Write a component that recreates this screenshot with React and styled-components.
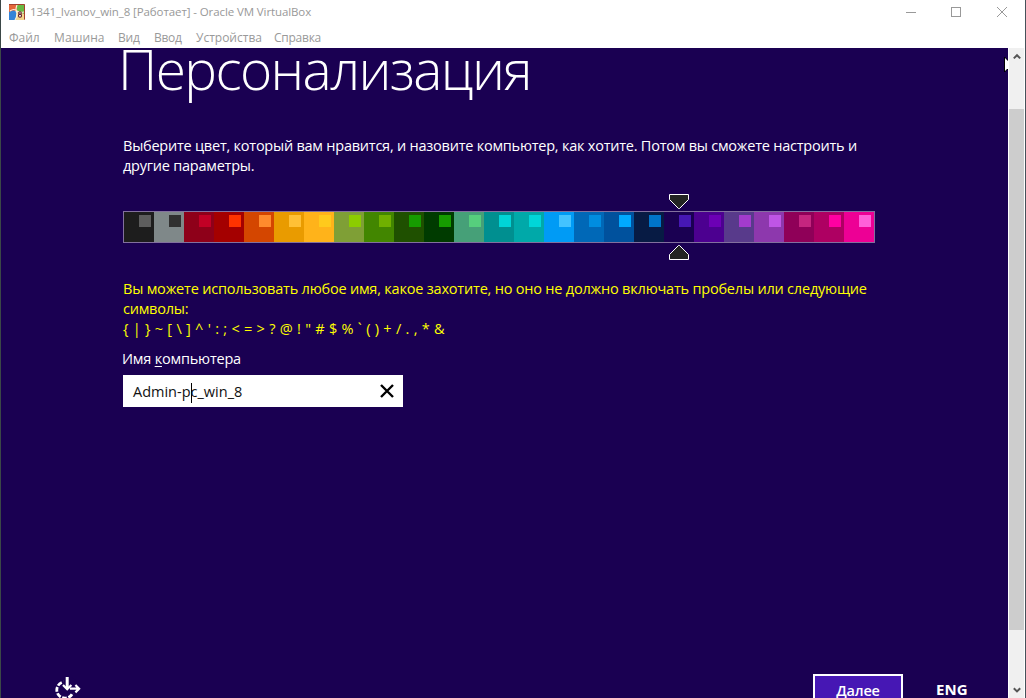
import React from "react";
import styled, { createGlobalStyle } from "styled-components";

const GlobalStyle = createGlobalStyle`
  * { box-sizing: border-box; }
  body { margin: 0; overflow: hidden; font-family: "Open Sans", "Noto Sans", sans-serif; }
`;

const Window = styled.div`
  width: 1026px;
  height: 698px;
  display: flex;
  flex-direction: column;
  background: #fff;
  border-left: 1px solid #3b4747;
  border-right: 1px solid #46525a;
  overflow: hidden;
`;

const TitleBar = styled.header`
  height: 24px;
  flex: none;
  display: flex;
  align-items: center;
  padding-left: 8px;
`;

const TitleText = styled.span`
  flex: 1;
  margin-left: 5px;
  font-size: 11.5px;
  line-height: 24px;
  letter-spacing: -0.1px;
  color: #999;
  white-space: nowrap;
`;

const WindowButton = styled.span`
  width: 45.5px;
  height: 22px;
  display: flex;
  align-items: center;
  justify-content: center;
`;

const MenuBar = styled.nav`
  height: 24px;
  flex: none;
  display: flex;
  padding-left: 8px;
`;

const MenuItem = styled.span`
  width: ${(p) => p.$width}px;
  font-size: 12px;
  line-height: 28px;
  letter-spacing: ${(p) => p.$tracking}px;
  color: #999;
  white-space: nowrap;
`;

const Viewport = styled.div`
  flex: 1;
  min-height: 0;
  display: flex;
`;

const Screen = styled.main`
  position: relative;
  width: 1007px;
  display: flex;
  flex-direction: column;
  background: #1a0052;
  color: #fff;
  overflow: hidden;
`;

const Content = styled.section`
  flex: 1;
  padding-left: 122px;
`;

const Heading = styled.h1`
  height: 88px;
  margin: 0 0 0 -5px;
  font-size: 55px;
  font-weight: 300;
  line-height: 42px;
  letter-spacing: ${(p) => p.$tracking}px;
  white-space: nowrap;
`;

const Paragraph = styled.div`
  color: ${(p) => (p.$hint ? "#ffff00" : "#fff")};
`;

const Line = styled.div`
  height: 20px;
  font-size: 14.5px;
  line-height: 20px;
  letter-spacing: ${(p) => p.$tracking || 0}px;
  white-space: pre;
`;

const Picker = styled.div`
  width: 752px;
  margin: 18px 0 19px;
`;

const MarkerRow = styled.div`
  display: flex;
  height: ${(p) => p.$height}px;
  padding-left: 546px;
  align-items: ${(p) => p.$align};
`;

const Strip = styled.div`
  display: flex;
  height: 32px;
  border: 1px solid #82709e;
`;

const Swatch = styled.div`
  width: 30px;
  height: 30px;
  padding: 3px 3px 0 15px;
  background: ${(p) => p.$color};
`;

const Accent = styled.div`
  width: 12px;
  height: 12px;
  background: ${(p) => p.$color};
`;

const Label = styled.label`
  display: block;
  height: 36px;
  margin-left: -1px;
  font-size: 14.5px;
  line-height: 40px;
  letter-spacing: ${(p) => p.$tracking}px;

  u { text-underline-offset: 2px; text-decoration-thickness: 1px; }
`;

const Field = styled.div`
  width: 280px;
  height: 32px;
  display: flex;
  align-items: center;
  justify-content: space-between;
  padding: 0 8px 0 10px;
  background: #fff;
  color: #111;
  font-size: 14.5px;
  letter-spacing: ${(p) => p.$tracking}px;
`;

const FieldText = styled.span`
  padding-top: 3px;
  line-height: 20px;
`;

const Caret = styled.span`
  display: inline-block;
  width: 1px;
  height: 20px;
  margin: -2px -1px 0 0;
  background: #000;
  vertical-align: middle;
`;

const Footer = styled.footer`
  height: 24px;
  flex: none;
  display: flex;
  padding-left: 52px;
`;

const NextButton = styled.div`
  width: 90px;
  height: 36px;
  margin-left: 730px;
  border: 2px solid #fff;
  background: #4617b4;
  font-size: 14.5px;
  font-weight: 600;
  line-height: 30px;
  text-align: center;
  letter-spacing: ${(p) => p.$tracking}px;

  u { text-underline-offset: 2px; }
`;

const Language = styled.div`
  margin-left: 33px;
  font-size: 15px;
  font-weight: 700;
  line-height: 31px;
  letter-spacing: ${(p) => p.$tracking}px;
`;

const Pointer = styled.svg`
  position: absolute;
  right: 0;
  top: 9px;
`;

const ScrollBar = styled.aside`
  width: 17px;
  display: flex;
  flex-direction: column;
  border-left: 1px solid #fff;
  border-right: 1px solid #fff;
  background: #f0f0f0;
`;

const ScrollArrow = styled.span`
  height: ${(p) => p.$height}px;
  display: flex;
  justify-content: center;
  padding-top: ${(p) => p.$top}px;
`;

const Thumb = styled.div`
  height: 521px;
  margin-top: 44px;
  background: #cdcdcd;
`;

const menu = [
  ["Файл", 45, 0],
  ["Машина", 64, 0.1],
  ["Вид", 36, -0.2],
  ["Ввод", 42, -0.3],
  ["Устройства", 78, 0],
  ["Справка", 60, -0.25],
];

const swatches = [
  ["#1d1d1d", "#5d5d5d"], ["#7f8889", "#303030"], ["#8e0019", "#c10025"],
  ["#a40000", "#ff3300"], ["#d44600", "#ff8b2d"], ["#e99b00", "#ffc036"],
  ["#ffb31a", "#ffca1c"], ["#7f9f36", "#8ccc00"], ["#428600", "#70b000"],
  ["#1f5000", "#169b00"], ["#003b00", "#169b00"], ["#46a078", "#56ce7d"],
  ["#008f90", "#00d4d7"], ["#00a9a9", "#00d6d8"], ["#009bf5", "#43c3ff"],
  ["#0068b7", "#008de0"], ["#00519d", "#00a9ff"], ["#071b44", "#0074c9"],
  ["#1a0052", "#4617b4"], ["#4c0090", "#6c00b5"], ["#583a8b", "#a33bcd"],
  ["#8d38ad", "#bf55e5"], ["#8f0058", "#c5257f"], ["#ae0062", "#ff00a2"],
  ["#ed0095", "#ff5fd9"],
];

function AppIcon() {
  return (
    <svg width="16" height="16" viewBox="0 0 16 16">
      <rect width="16" height="16" fill="#c9c4b2" />
      <path d="M0 1h8v6L0 9Z" fill="#e4683a" />
      <path d="M8 1h7v9L8 7Z" fill="#68b943" />
      <path d="M0 8q5-3 8 0l-1 8H0Z" fill="#3484d8" />
      <path d="M8 8l7 2v6H7Z" fill="#f3d58c" />
      <path d="M1 7q4-3 7 0 3 2 7 1M8 1Q6 6 8 9q0 4-2 7" fill="none" stroke="#fff3d9" strokeWidth="1.2" />
      <path d="M0 .5h15.5v15" fill="none" stroke="#a5402d" strokeWidth="1" />
      <circle cx="11" cy="9" r="1.3" fill="#fff" stroke="#5c1720" strokeWidth="1.1" />
      <circle cx="11" cy="11.8" r="1.5" fill="#fff" stroke="#5c1720" strokeWidth="1.1" />
    </svg>
  );
}

function Marker({ up }) {
  return (
    <svg width="20" height="15" viewBox="0 0 20 15">
      <path
        d={up ? "M.5 14.5V9.5L9.5.5h1l9 9v5Z" : "M.5.5h19v5l-9 9h-1l-9-9Z"}
        fill="#222422"
        stroke="#fff"
      />
    </svg>
  );
}

function Chevron({ down }) {
  return (
    <svg width="8" height="7" viewBox="0 0 8 7">
      <path d={down ? "M.8 1.2L4 4.4l3.2-3.2" : "M.8 5.4L4 2.2l3.2 3.2"} fill="none" stroke="#555" strokeWidth="2" />
    </svg>
  );
}

function AccessIcon() {
  return (
    <svg width="30" height="26" viewBox="0 0 30 26" fill="none" stroke="#fff">
      <circle cx="12" cy="16" r="8.2" strokeWidth="2.8" strokeDasharray="4.9 1.54" strokeDashoffset="2" />
      <path d="M10.5 3h8l9 7v9h-9l-4-1-5-4z" fill="#1a0052" stroke="none" />
      <path d="M14.2 3v12" strokeWidth="3" />
      <path d="M10 11l4.2 4.2 4.2-4.2" strokeWidth="2.2" />
      <path d="M17 14.7h9M22.4 11l3.7 3.7-3.7 3.7" strokeWidth="2.2" />
    </svg>
  );
}

export default function App() {
  return (
    <Window>
      <GlobalStyle />
      <TitleBar>
        <AppIcon />
        <TitleText>1341_Ivanov_win_8 [Работает] - Oracle VM VirtualBox</TitleText>
        <WindowButton>
          <svg width="11" height="11" stroke="#999"><path d="M0 5.5h10" /></svg>
        </WindowButton>
        <WindowButton>
          <svg width="11" height="11" fill="none" stroke="#999"><rect x=".5" y=".5" width="9" height="9" /></svg>
        </WindowButton>
        <WindowButton>
          <svg width="11" height="11" stroke="#999"><path d="M0 0l10 10M10 0L0 10" /></svg>
        </WindowButton>
      </TitleBar>
      <MenuBar>
        {menu.map(([name, width, tracking]) => (
          <MenuItem key={name} $width={width} $tracking={tracking}>{name}</MenuItem>
        ))}
      </MenuBar>
      <Viewport>
        <Screen>
          <Content>
            <Heading $tracking={-1.6}>Персонализация</Heading>
            <Paragraph>
              <Line $tracking={-0.23}>Выберите цвет, который вам нравится, и назовите компьютер, как хотите. Потом вы сможете настроить и</Line>
              <Line $tracking={-0.23}>другие параметры.</Line>
            </Paragraph>
            <Picker>
              <MarkerRow $height={17} $align="flex-start"><Marker /></MarkerRow>
              <Strip>
                {swatches.map(([base, accent], i) => (
                  <Swatch key={i} $color={base}><Accent $color={accent} /></Swatch>
                ))}
              </Strip>
              <MarkerRow $height={17} $align="flex-end"><Marker up /></MarkerRow>
            </Picker>
            <Paragraph $hint>
              <Line $tracking={-0.2}>Вы можете использовать любое имя, какое захотите, но оно не должно включать пробелы или следующие</Line>
              <Line $tracking={-0.23}>символы:</Line>
              <Line $tracking={0.27}>{"{ | } ~ [ \\ ] ^ ' : ; < = > ? @ ! \" # $ % ` ( ) + / . , * &"}</Line>
            </Paragraph>
            <Label $tracking={-0.2}>Имя <u>к</u>омпьютера</Label>
            <Field $tracking={0}>
              <FieldText>Admin-p<Caret />c_win_8</FieldText>
              <svg width="16" height="16" stroke="#000" strokeWidth="2.4"><path d="M2 2l12 12M14 2L2 14" /></svg>
            </Field>
          </Content>
          <Footer>
            <AccessIcon />
            <NextButton $tracking={-0.2}>Да<u>л</u>ее</NextButton>
            <Language $tracking={0.1}>ENG</Language>
          </Footer>
          <Pointer width="4" height="16" viewBox="0 0 4 16">
            <path d="M0 0h1l3 3v10H3l-2 2H0Z" fill="#000" />
            <path d="M1 1l3 3v8H3l-2 2Z" fill="#fff" />
          </Pointer>
        </Screen>
        <ScrollBar>
          <ScrollArrow $height={17} $top={5}><Chevron /></ScrollArrow>
          <Thumb />
          <ScrollArrow $height={68} $top={57}><Chevron down /></ScrollArrow>
        </ScrollBar>
      </Viewport>
    </Window>
  );
}
